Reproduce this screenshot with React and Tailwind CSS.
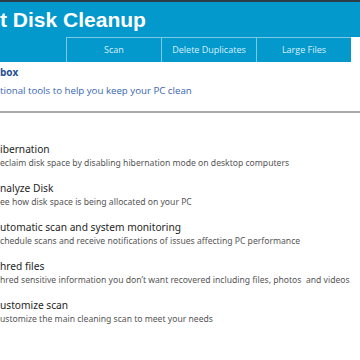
import React from 'react'

const TABS = ['Scan', 'Delete Duplicates', 'Large Files']

const ITEMS = [
  { title: 'ibernation', desc: 'eclaim disk space by disabling hibernation mode on desktop computers' },
  { title: 'nalyze Disk', desc: 'ee how disk space is being allocated on your PC' },
  { title: 'utomatic scan and system monitoring', desc: 'chedule scans and receive notifications of issues affecting PC performance' },
  { title: 'hred files', desc: 'hred sensitive information you don\u2019t want recovered including files, photos  and videos' },
  { title: 'ustomize scan', desc: 'ustomize the main cleaning scan to meet your needs' },
]

export default function App() {
  return (
    <div className="w-[360px] h-[360px] overflow-hidden bg-white" style={{ fontFamily: '"Open Sans", "Liberation Sans", sans-serif' }}>
      {/* Header */}
      <div className="border-t-2 border-[#2d3e4a] bg-[#0399cd] h-[37px]">
        <h1 className="text-white font-bold text-[21px] leading-none pt-[7px] whitespace-pre" style={{ fontFamily: '"Liberation Sans", Arial, sans-serif' }}>
          t Disk Cleanup
        </h1>
      </div>
      <div className="flex h-[25px]">
        <div className="w-[66px] bg-[#0399cd]" />
        {TABS.map((t) => (
          <div
            key={t}
            className="w-[95px] bg-[#0399cd] border-t border-l border-[#7cc8e6] last:border-r flex items-center justify-center text-[9px] text-[#d9eff9]"
          >
            {t}
          </div>
        ))}
        <div className="flex-1 bg-white" />
      </div>

      {/* Toolbox */}
      <div className="border-b-2 border-[#a9a9a9] h-[51px] pt-[3px]">
        <p className="text-[10px] font-bold text-[#1e4f94] leading-[14px]">box</p>
        <p className="text-[9.7px] text-[#3866b0] leading-[14px] mt-[5px] whitespace-pre">tional tools to help you keep your PC clean</p>
      </div>

      {/* Items */}
      <div className="pt-[29px] flex flex-col gap-[12px]" style={{ fontFamily: '"Noto Sans", "Open Sans", sans-serif' }}>
        {ITEMS.map((it) => (
          <div key={it.title}>
            <p className="text-[10.2px] text-[#1e1e1e] leading-[14px] whitespace-pre">{it.title}</p>
            <p className="text-[8.6px] text-[#555] leading-[12px] mt-[1px] whitespace-pre">{it.desc}</p>
          </div>
        ))}
      </div>
    </div>
  )
}
